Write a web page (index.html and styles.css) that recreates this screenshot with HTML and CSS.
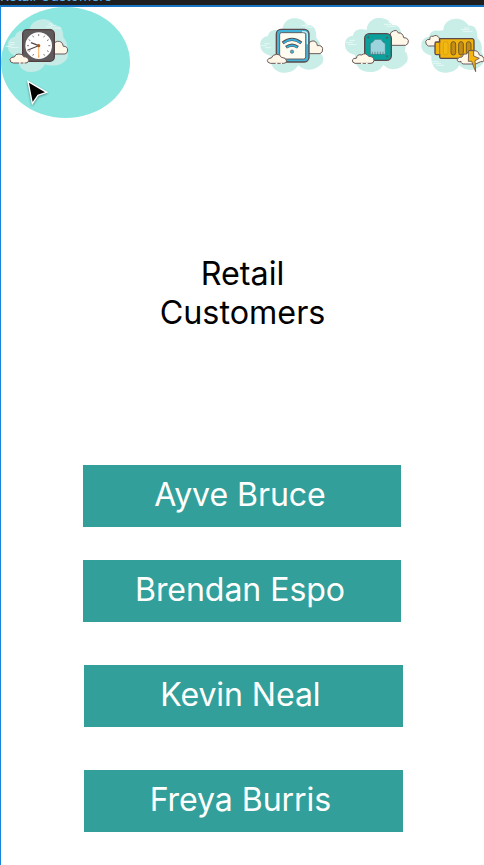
FILE: index.html
```html
<!DOCTYPE html>
<html lang="en">
<head>
<meta charset="utf-8">
<title>Retail Customers</title>
<link rel="stylesheet" href="styles.css">
</head>
<body>
<div class="canvas-bar"><span class="frame-label">Retail Customers</span></div>
<main class="frame">
  <div class="highlight"></div>
  <header class="icons">
    <svg class="icon icon-clock" viewBox="3 0 222 210">
      <path class="cloud-bg on-teal" d="M72 64C60 61 48 66 45 80C30 84 22 93 23 109C24 127 37 136 53 140C52 165 66 186 92 186C112 187 126 178 135 163C156 170 188 169 203 143C207 112 199 91 190 82C190 56 180 45 164 47C155 33 141 27 126 28C105 30 89 42 89 64Z"/>
      <path class="spark" d="M139 50h16M153 46h16M153 54h31M145 42h12M17 109h18M28 104h16M32 113h24M29 98h15"/>
      <path class="puff" d="M163 132H195Q203 130 203 120Q202 108 190 109Q187 92 172 94Q163 94 160 106Z"/>
      <rect x="68" y="59" width="95" height="95" rx="13" fill="#5f5b5d" stroke="#513f3f" stroke-width="4"/>
      <circle cx="116" cy="107" r="40" fill="#fffefe"/>
      <g stroke="#6b6061" stroke-width="2.5"><path d="M116 72v6M116 136v6M81 107h6M145 107h6M98 77l3 5M131 132l3 5M86 89l5 3M141 122l5 3M86 125l5-3M141 92l5-3M98 137l3-5M131 82l3-5"/></g>
      <path d="M116 107L93 98M116 107L82 121" stroke="#564647" stroke-width="3.5"/>
      <path d="M116 106V143" stroke="#ffb15c" stroke-width="3"/><circle cx="116" cy="107" r="5" fill="#a9581e"/>
      <path class="puff" d="M40 159Q29 158 30 148Q33 140 43 141Q46 131 57 132Q68 131 71 140Q85 141 86 151Q86 158 78 159Z"/>
      <path class="gap-line" d="M57 159h5M70 159h4"/>
    </svg>
    <svg class="icon icon-wifi" viewBox="0 0 225 210">
      <path class="cloud-bg" d="M65 60C51 59 41 65 39 78C23 80 15 91 16 107C17 123 29 132 46 137C43 164 59 188 87 188C108 189 121 180 130 166C150 186 182 183 202 160C207 148 205 137 196 130C201 113 196 94 184 84C185 56 175 43 158 45C146 30 131 22 112 25C94 29 83 43 82 60Z"/>
      <path class="spark" d="M139 47h22M149 42h15M151 51h24M17 107h18M28 101h17M30 113h18"/>
      <path class="puff" d="M159 131H195Q204 128 203 116Q201 105 187 107Q185 91 171 93Q162 94 159 105Z"/>
      <rect x="64" y="58" width="98" height="98" rx="14" fill="#43b4d8" stroke="#5b494b" stroke-width="4"/>
      <rect x="74" y="68" width="78" height="79" rx="6" fill="#fffdf1" stroke="#5b494b" stroke-width="2.5"/>
      <path d="M141 65h5q11 0 11 10v28" fill="none" stroke="#c6edf4" stroke-width="4"/>
      <g fill="none"><path d="M83 99Q111 77 139 99M93 112Q111 99 129 112" stroke="#5b494b" stroke-width="9.5"/><path d="M85 99Q111 78 137 99M95 112Q111 100 127 112" stroke="#35b0da" stroke-width="5.5"/></g>
      <circle cx="111" cy="125" r="5" fill="#43b4d8" stroke="#5b6269" stroke-width="2"/>
      <path class="puff" d="M46 160Q37 158 37 151Q40 143 49 144Q53 133 65 133Q75 132 79 142Q93 142 95 153Q94 160 86 160Z"/>
      <path class="gap-line" d="M62 160h5M77 160h4"/>
    </svg>
    <svg class="icon icon-port" viewBox="0 0 222 210">
      <path class="cloud-bg" d="M75 59C53 55 41 63 39 77C23 79 14 89 15 106C16 122 27 131 45 135C42 163 57 185 86 186C108 187 122 179 130 164C150 187 183 180 202 154C205 142 202 129 194 123C200 110 196 92 184 82C185 55 175 43 157 45C147 29 132 22 111 24C93 27 81 42 80 59Z"/>
      <path class="spark" d="M131 43h23M145 37h13M140 49h27M16 98h22M28 91h17M24 104h25"/>
      <path class="puff" d="M153 106H197Q207 102 205 91Q202 82 191 83Q188 67 175 69Q171 58 160 63Q151 65 149 78Z"/>
      <rect x="74" y="71" width="80" height="80" rx="14" fill="#0aa09b" stroke="#5b494b" stroke-width="4"/>
      <path d="M91 133V101L99 95L105 88H123L128 95L136 101V133Z" fill="#9dd3dc" stroke="#477c80" stroke-width="2"/>
      <path d="M97 125v9M105 125v9M113 125v9M121 125v9M129 125v9" stroke="#516f75" stroke-width="2"/>
      <g fill="#426f70" stroke="#544b4d" stroke-width="1"><circle cx="85" cy="82" r="2.5"/><circle cx="141" cy="83" r="2.5"/><circle cx="141" cy="139" r="2.5"/></g>
      <path class="puff" d="M45 160Q36 158 37 150Q41 143 49 145Q52 131 65 135Q77 126 86 139Q101 139 102 151Q101 160 93 160Z"/>
      <path class="gap-line" d="M63 160h5M78 160h5"/>
    </svg>
    <svg class="icon icon-battery" viewBox="0 0 210 210">
      <path class="cloud-bg" d="M73 62C57 60 48 67 45 80C30 82 21 92 22 109C23 124 35 132 52 137C50 165 65 186 92 188C113 189 127 181 136 166C157 188 190 183 208 158C210 144 209 132 202 127C207 110 201 93 190 84C191 56 180 44 164 47C154 32 138 24 119 27C99 30 88 44 88 61Z"/>
      <path class="spark" d="M141 59h24M150 54h16M147 64h29M55 155h20M57 161h24M67 166h24"/>
      <path class="puff" d="M43 108Q34 104 35 94Q39 86 48 88Q46 77 57 79Q68 72 76 84V108Z"/>
      <path d="M77 88Q77 86 80 86H175Q180 87 180 92V139Q180 144 175 145H81Q77 144 77 140V134H67Q63 134 63 129V101Q63 96 67 96H77Z" fill="#f1b30d" stroke="#5b494b" stroke-width="4"/>
      <path d="M77 96V134" stroke="#8f6d2b" stroke-width="2.5"/>
      <rect x="88" y="95" width="14" height="40" rx="7" fill="#f2b915" stroke="#d59c0a" stroke-width="2"/>
      <g fill="#c48c15" stroke="#755c23" stroke-width="3"><rect x="111" y="95" width="14" height="40" rx="7"/><rect x="134" y="95" width="14" height="40" rx="7"/><rect x="157" y="95" width="14" height="40" rx="7"/></g>
      <path class="puff" d="M141 154Q129 158 130 148Q134 140 144 141Q148 128 158 132Q166 117 180 122Q193 121 196 135Q207 136 210 146V152Q208 156 200 155L185 162H155Q140 163 141 154Z"/>
      <path d="M164 122H179L179 138L196 145L183 152L185 185L173 154H163Z" fill="#f4b511" stroke="#68504c" stroke-width="2.5" stroke-linejoin="round"/>
    </svg>
  </header>
  <svg class="cursor" viewBox="0 0 66 78"><path d="M6 7L62 40L36 49L19 74Z" fill="#000" stroke="#fff" stroke-width="4"/></svg>
  <h1 class="title">Retail<br>Customers</h1>
  <div class="customers">
    <button class="customer">Ayve Bruce</button>
    <button class="customer second">Brendan Espo</button>
    <button class="customer third">Kevin Neal</button>
    <button class="customer fourth">Freya Burris</button>
  </div>
</main>
</body>
</html>
```
FILE: styles.css
```css
* { box-sizing: border-box; }
body { margin: 0; height: 865px; overflow: hidden; background: #fff; font-family: Inter, sans-serif; }
.canvas-bar { height: 5px; background: #1e1e1e; overflow: hidden; display: flex; align-items: flex-end; }
.frame-label { color: #58aee5; font-size: 14px; line-height: 14px; white-space: nowrap; margin-bottom: 2px; }
.frame { position: relative; height: 860px; border-top: 2px solid #1675c5; border-left: 1px solid #1685d9; }
.highlight { position: absolute; left: 0; top: 0; width: 129px; height: 111px; border-radius: 50%; background: #8be6e0; }
.icons { position: relative; display: flex; height: 73px; padding-top: 3px; }
.icon { display: block; flex: none; height: 70px; }
.icon-clock { width: 74px; }
.icon-wifi { width: 75px; margin-left: auto; margin-right: 10px; }
.icon-port { width: 74px; }
.icon-battery { width: 70px; }
.cloud-bg { fill: #c9eee8; }
.on-teal { fill: #c4ebe6; }
.spark { fill: none; stroke: #f3fffd; stroke-width: 2; }
.puff { fill: #fff8e9; stroke: #6b595a; stroke-width: 3; stroke-linejoin: round; }
.gap-line { stroke: #fff8e9; stroke-width: 4; }
.cursor { position: absolute; left: 25px; top: 72px; width: 22px; height: 26px; filter: drop-shadow(0 1px 1px rgba(0, 0, 0, .4)); }
.title { margin: 174px 0 0; font-size: 32.3px; line-height: 39px; font-weight: 400; text-align: center; color: #000; }
.customers { display: flex; flex-direction: column; margin: 133px 0 0 81.7px; width: 320px; }
.customer { width: 318.6px; height: 62px; border: 0; padding: 0 4px 4px 0; background: #339f9a; color: #fff; font: 400 32.1px/39px Inter, sans-serif; letter-spacing: -0.08px; text-align: center; }
.second { margin-top: 33.4px; }
.third { margin: 43px 0 0 1.4px; padding-right: 6px; }
.fourth { margin: 42.8px 0 0 1.4px; padding-right: 6px; }
```
